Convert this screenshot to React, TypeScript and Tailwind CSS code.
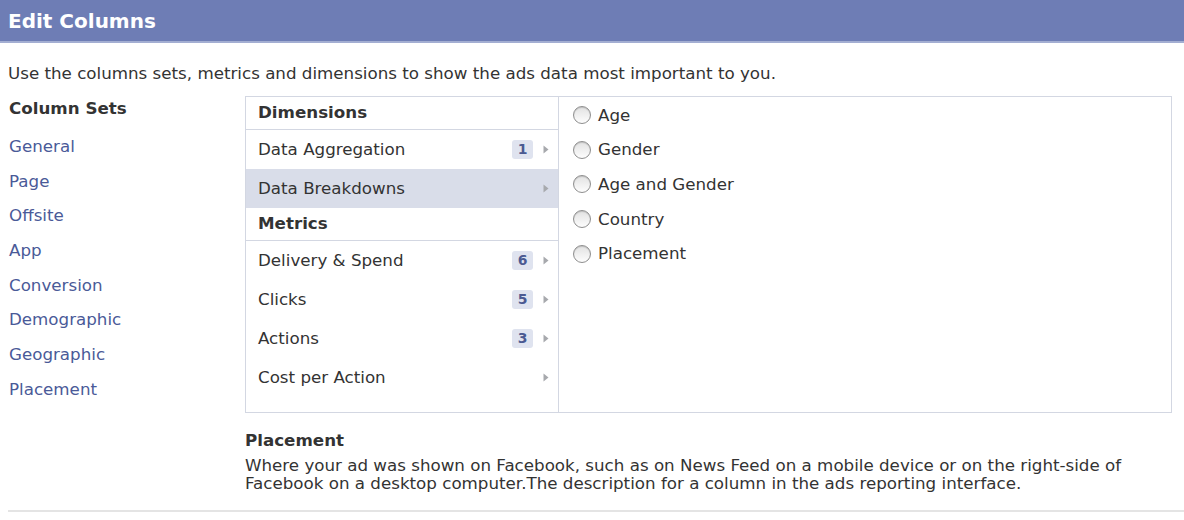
import React from "react";

const font = { fontFamily: '"DejaVu Sans", "Lucida Grande", Verdana, sans-serif' };

const sets = ["General", "Page", "Offsite", "App", "Conversion", "Demographic", "Geographic", "Placement"];

type Item = { label: string; count?: number; selected?: boolean };

const dims: Item[] = [
  { label: "Data Aggregation", count: 1 },
  { label: "Data Breakdowns", selected: true },
];
const metrics: Item[] = [
  { label: "Delivery & Spend", count: 6 },
  { label: "Clicks", count: 5 },
  { label: "Actions", count: 3 },
  { label: "Cost per Action" },
];

const options = ["Age", "Gender", "Age and Gender", "Country", "Placement"];

function Arrow() {
  return (
    <svg width="6" height="9" viewBox="0 0 6 9" className="ml-[10px]">
      <path d="M0.5 0.5 L5.5 4.5 L0.5 8.5 Z" fill="#a7a9ad" />
    </svg>
  );
}

function Row({ item }: { item: Item }) {
  return (
    <div
      className={`flex h-[39px] items-center pl-[12px] pr-[9px] ${item.selected ? "bg-[#d9dde9]" : ""}`}
    >
      <span className="flex-1 text-[#333333]">{item.label}</span>
      {item.count !== undefined && (
        <span className="flex h-[19px] w-[21px] items-center justify-center rounded-[3px] bg-[#dfe3ef] text-[14px] font-bold text-[#4b5a92]">
          {item.count}
        </span>
      )}
      <Arrow />
    </div>
  );
}

function Radio() {
  return (
    <span className="mr-[7px] inline-block h-[18px] w-[18px] rounded-full border border-[#8e8e8e] bg-gradient-to-b from-[#e2e2e2] to-[#fdfdfd] shadow-[inset_0_1px_1px_rgba(0,0,0,0.15)]" />
  );
}

export default function App() {
  return (
    <div className="h-[520px] w-[1184px] overflow-hidden bg-white text-[16.7px] text-[#333333]" style={font}>
      <div className="flex h-[43px] items-center border-b-[2px] border-[#a3aed2] bg-[#6e7db5] pl-[8px]">
        <span className="text-[20px] font-bold text-white">Edit Columns</span>
      </div>
      <div className="pl-[8px] pt-[20px] leading-[20px]">Use the columns sets, metrics and dimensions to show the ads data most important to you.</div>
      <div className="mt-[13px] flex">
        <div className="w-[245px] pl-[9px]">
          <div className="pt-[2px] font-bold leading-[20px] text-[#333333]">Column Sets</div>
          <div className="mt-[18px] flex flex-col gap-[14.7px]">
            {sets.map((s) => (
              <div key={s} className="h-[20px] leading-[20px] text-[#4a5a98]">{s}</div>
            ))}
          </div>
        </div>
        <div>
          <div className="flex h-[317px] w-[927px] border border-[#d3d7e2]">
            <div className="w-[313px] border-r border-[#d3d7e2]">
              <div className="flex h-[33px] items-center border-b border-[#d3d7e2] pl-[12px] font-bold">Dimensions</div>
              {dims.map((d) => (
                <Row key={d.label} item={d} />
              ))}
              <div className="flex h-[33px] items-center border-b border-[#d3d7e2] pl-[12px] font-bold">Metrics</div>
              {metrics.map((d) => (
                <Row key={d.label} item={d} />
              ))}
            </div>
            <div className="flex-1 pl-[14px] pt-[1px]">
              {options.map((o) => (
                <div key={o} className="flex h-[34.6px] items-center">
                  <Radio />
                  <span>{o}</span>
                </div>
              ))}
            </div>
          </div>
          <div className="mt-[18px] leading-[18px]">
            <div className="font-bold">Placement</div>
            <div className="mt-[7px] w-[925px]">
              Where your ad was shown on Facebook, such as on News Feed on a mobile device or on the right-side of Facebook on a desktop computer.The description for a column in the ads reporting interface.
            </div>
          </div>
        </div>
      </div>
      <div className="ml-[8px] mt-[18px] border-t-[2px] border-[#e4e4e4]" />
    </div>
  );
}
